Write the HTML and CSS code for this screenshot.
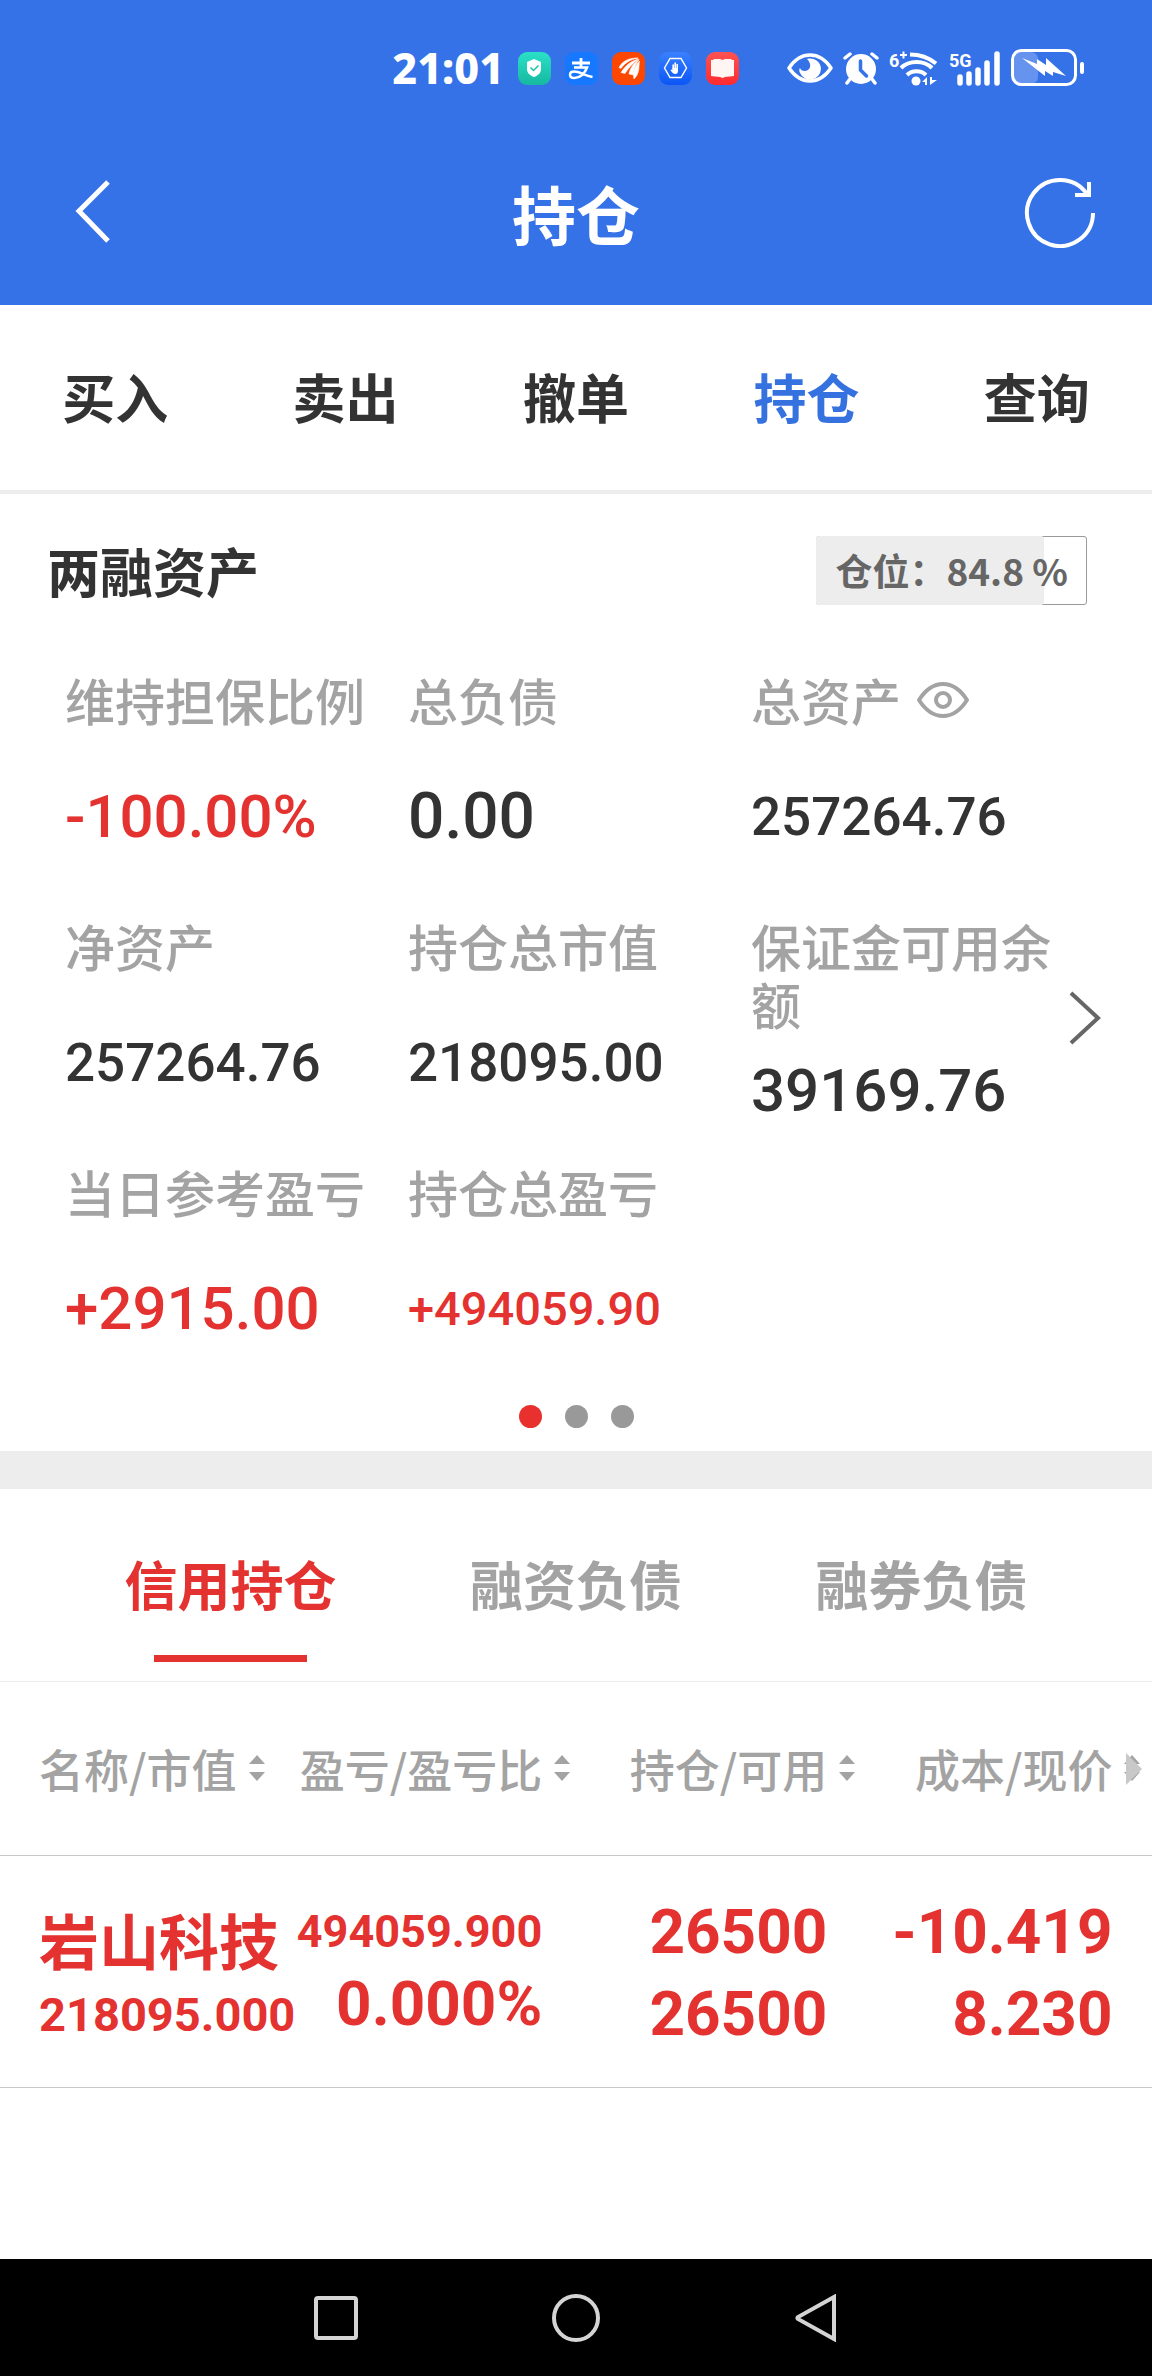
FILE: index.html
```html
<!DOCTYPE html>
<html lang="zh-CN">
<head>
    <meta charset="UTF-8">
    <meta name="viewport" content="width=device-width, initial-scale=1.0">
    <title>持仓</title>
    <link rel="stylesheet" href="styles.css">
</head>
<body>
    <div class="page">
        <header class="header">
            <div class="status-bar">
                <span class="time">21:01</span>
                <div class="app-icons">
                    <svg width="33" height="33" viewBox="0 0 33 33">
                        <defs>
                            <linearGradient id="gGreen" x1="0" y1="0" x2="0" y2="1"><stop offset="0" stop-color="#2be0c8"/><stop offset="1" stop-color="#16b8a0"/></linearGradient>
                        </defs>
                        <rect width="33" height="33" rx="9" fill="url(#gGreen)"/>
                        <path d="M16 7l7 3v7c0 4-3 6.500-7 8-4-1.500-7-4-7-8v-7z" fill="#fff"/>
                        <path d="M12.500 15.500l3 3 5-5" fill="none" stroke="#1cc4ac" stroke-width="1.500"/>
                    </svg>
                    <svg width="33" height="33" viewBox="0 0 33 33" fill="none" stroke="#fff">
                        <rect width="33" height="33" rx="9" fill="#1677ff" stroke="none"/>
                        <path d="M7 11h18M16 6v9" stroke-width="2.800"/>
                        <path d="M9 15.500h13c-2 6-7 10.500-12.500 10.500-3 0-4.500-1.500-4.500-3.300 0-2 2-3.200 4.500-3.200 5 0 10 4 18 5.500" stroke-width="2.500"/>
                    </svg>
                    <svg width="33" height="33" viewBox="0 0 33 33">
                        <rect width="33" height="33" rx="9" fill="#fd4600"/>
                        <path d="M7 15.500C11 8 18 6 26 6c-8 1.500-13 5-17 10.500zM9 20.500C14 13 19 9 26.500 7c-5 4-9.500 8-13.500 14.500zM17 22c1-6 5-11 10-14.500-4 6-5.500 10-5.500 15.500zM22 27c-1.500-7 1-13 5.500-18-1 6 .5 12-5.500 18z" fill="#fff" stroke="#fff" stroke-width=".6"/>
                    </svg>
                    <svg width="33" height="33" viewBox="0 0 33 33">
                        <defs>
                            <linearGradient id="gBlue" x1="0" y1="0" x2="0" y2="1"><stop offset="0" stop-color="#3a80ff"/><stop offset="1" stop-color="#0b56f5"/></linearGradient>
                        </defs>
                        <rect width="33" height="33" rx="9" fill="url(#gBlue)"/>
                        <path d="M11 6.500h11l5.500 9.500-5.500 9.500H11L5.500 16z" fill="none" stroke="#fff" stroke-width="1.400"/>
                        <path d="M14.200 17v-4M16.200 16v-5M18.200 17v-4.500" stroke="#fff" stroke-width="1.600" stroke-linecap="round"/>
                        <path d="M13.400 16h5.600v3c0 2-1 3-2.500 3s-3-.5-5-4l1-.5 1 .8z" fill="#fff"/>
                    </svg>
                    <svg width="33" height="33" viewBox="0 0 33 33">
                        <defs>
                            <linearGradient id="gRed" x1="0" y1="0" x2="0" y2="1"><stop offset="0" stop-color="#ff5252"/><stop offset="1" stop-color="#ff2a2f"/></linearGradient>
                        </defs>
                        <rect width="33" height="33" rx="9" fill="url(#gRed)"/>
                        <path d="M5 8h2l1-1h6l2.500 1L19 7h6l1 1h2v16l-9 1-2.500 1L14 25l-9-1z" fill="#fff5f2"/>
                    </svg>
                </div>
                <div class="sys-icons">
                    <svg width="46" height="32" viewBox="0 0 46 32">
                        <path d="M2 16C8 7 15 3 23 3s15 4 21 13c-6 9-13 13-21 13S8 25 2 16z" fill="none" stroke="#fff" stroke-width="3.500" stroke-linejoin="round"/>
                        <path d="M20 7c7-2 14 3 14 10a11 11 0 0 1-21 4c-1-2-1-4 0-5 1 3 5 4 8 2 4-3 2-8-1-11z" fill="#fff"/>
                    </svg>
                    <svg width="36" height="34" viewBox="0 0 36 34">
                        <path d="M2 7l5-4M34 7l-5-4M7 28l-3 4M29 28l3 4" stroke="#fff" stroke-width="3.500" stroke-linecap="round"/>
                        <circle cx="18" cy="18" r="15" fill="#fff"/>
                        <path d="M17.500 10v9l6 6" fill="none" stroke="#3572e8" stroke-width="3.500" stroke-linecap="round"/>
                    </svg>
                    <svg width="50" height="38" viewBox="0 0 50 38">
                        <text x="0" y="18" class="net-label">6</text>
                        <path d="M11 6h7M14.500 2.500v7" stroke="#fff" stroke-width="2"/>
                        <g fill="none" stroke="#fff" stroke-width="4">
                            <path d="M21 5.500c10 0 18 2.500 26 9"/>
                            <path d="M12 19c8-8 23-8 31 0"/>
                            <path d="M18 26c5-5 14-5 19 0"/>
                        </g>
                        <circle cx="27" cy="32" r="4.500" fill="#fff"/>
                        <path d="M33 33l5-5v8h-2v-3zM41 36v-8h2v3h5z" fill="#fff"/>
                    </svg>
                    <svg width="52" height="38" viewBox="0 0 52 38">
                        <text x="0" y="18" class="net-label">5G</text>
                        <path d="M11 28v6M20 25v9M29 21v13M38 14v20M48 5v29" stroke="#fff" stroke-width="5.500" stroke-linecap="round"/>
                    </svg>
                    <svg width="74" height="38" viewBox="0 0 74 38">
                        <rect x="3" y="3" width="24" height="32" rx="7" fill="#6593ee"/>
                        <rect x="1.500" y="1.500" width="63" height="34" rx="9" fill="none" stroke="#fff" stroke-width="3"/>
                        <path d="M11 9l15 6V10l9 6V9l20 18-13-4v4l-8-5v5z" fill="#fff"/>
                        <path d="M71 15v8" stroke="#fff" stroke-width="4" stroke-linecap="round"/>
                    </svg>
                </div>
            </div>
            <div class="title-bar">
                <button class="icon-btn" aria-label="返回">
                    <svg width="36" height="66" viewBox="0 0 36 66" fill="none" stroke="#fff" stroke-width="5"><path d="M34 3L5 32l29 30"/></svg>
                </button>
                <h1>持仓</h1>
                <button class="icon-btn" aria-label="刷新">
                    <svg width="72" height="72" viewBox="0 0 72 72" fill="none" stroke="#fff" stroke-width="4">
                        <path d="M69 37A33 33 0 1 1 63 18"/>
                        <path d="M65 6v13H51"/>
                    </svg>
                </button>
            </div>
        </header>

        <nav class="main-tabs">
            <a href="#buy">买入</a>
            <a href="#sell">卖出</a>
            <a href="#cancel">撤单</a>
            <a href="#position" class="active">持仓</a>
            <a href="#query">查询</a>
        </nav>

        <section class="assets">
            <div class="assets-head">
                <h2>两融资产</h2>
                <div class="ratio">
                    <div class="ratio-fill" style="width: 84.8%"></div>
                    <span class="ratio-text">仓位：84.8 %</span>
                </div>
            </div>
            <dl class="assets-grid">
                <div><dt>维持担保比例</dt><dd class="size-l red">-100.00%</dd></div>
                <div><dt>总负债</dt><dd class="size-xl">0.00</dd></div>
                <div>
                    <dt>总资产
                        <button class="eye-btn" aria-label="隐藏金额">
                            <svg width="52" height="36" viewBox="0 0 52 36" fill="none" stroke="#a3a3a3" stroke-width="4" stroke-linejoin="round">
                                <path d="M2 18C9 7 17 2 26 2s17 5 24 16c-7 11-15 16-24 16S9 29 2 18z"/>
                                <circle cx="26" cy="18" r="7"/>
                            </svg>
                        </button>
                    </dt>
                    <dd>257264.76</dd>
                </div>
                <div><dt>净资产</dt><dd>257264.76</dd></div>
                <div><dt>持仓总市值</dt><dd>218095.00</dd></div>
                <div><dt>保证金可用余额</dt><dd class="size-l">39169.76</dd></div>
                <div><dt>当日参考盈亏</dt><dd class="size-l red">+2915.00</dd></div>
                <div><dt>持仓总盈亏</dt><dd class="size-s red">+494059.90</dd></div>
            </dl>
            <button class="next-btn" aria-label="下一页">
                <svg width="34" height="54" viewBox="0 0 34 54" fill="none" stroke="#666" stroke-width="4"><path d="M3 2l27 25L3 52"/></svg>
            </button>
            <div class="dots">
                <span class="dot on"></span>
                <span class="dot"></span>
                <span class="dot"></span>
            </div>
        </section>

        <nav class="sub-tabs">
            <a href="#credit" class="active">信用持仓</a>
            <a href="#margin">融资负债</a>
            <a href="#short">融券负债</a>
        </nav>

        <div class="table-wrap">
            <table class="holdings">
                <thead>
                    <tr>
                        <th><button>名称/市值<svg class="sort" viewBox="0 0 16 26"><path d="M0 9l8-9 8 9zM0 17h16l-8 9z"/></svg></button></th>
                        <th><button>盈亏/盈亏比<svg class="sort" viewBox="0 0 16 26"><path d="M0 9l8-9 8 9zM0 17h16l-8 9z"/></svg></button></th>
                        <th><button>持仓/可用<svg class="sort" viewBox="0 0 16 26"><path d="M0 9l8-9 8 9zM0 17h16l-8 9z"/></svg></button></th>
                        <th><button>成本/现价<svg class="sort" viewBox="0 0 16 26"><path d="M0 9l8-9 8 9zM0 17h16l-8 9z"/></svg></button></th>
                    </tr>
                </thead>
                <tbody>
                    <tr>
                        <td class="stock"><span class="name">岩山科技</span><span class="worth">218095.000</span></td>
                        <td class="profit"><span class="amount">494059.900</span><span class="rate">0.000%</span></td>
                        <td><span>26500</span><span>26500</span></td>
                        <td><span>-10.419</span><span>8.230</span></td>
                    </tr>
                </tbody>
            </table>
            <svg class="more" width="16" height="32" viewBox="0 0 16 32"><path d="M0 0l16 16L0 32z" fill="#c8c8c8"/></svg>
        </div>

        <footer class="sys-nav">
            <button class="icon-btn" aria-label="最近任务">
                <svg width="48" height="48" viewBox="0 0 48 48"><rect x="4" y="4" width="40" height="40" rx="2"/></svg>
            </button>
            <button class="icon-btn" aria-label="主页">
                <svg width="48" height="48" viewBox="0 0 48 48"><circle cx="24" cy="24" r="22"/></svg>
            </button>
            <button class="icon-btn" aria-label="返回上一级">
                <svg width="48" height="48" viewBox="0 0 48 48"><path d="M42 3v42L6 25q-1-1 0-2z"/></svg>
            </button>
        </footer>
    </div>
</body>
</html>
```

FILE: styles.css
```css
* {
    box-sizing: border-box;
}

body {
    margin: 0;
    background-color: #fff;
    color: #333;
    font-family: "Noto Sans CJK SC", sans-serif;
}

h1, h2, dl, dd {
    margin: 0;
}

button {
    padding: 0;
    border: 0;
    background: none;
    color: inherit;
    font: inherit;
    cursor: pointer;
}

a {
    color: inherit;
    text-decoration: none;
}

svg {
    display: block;
}

.page {
    display: flex;
    flex-direction: column;
    min-height: 100vh;
}

/* header */
.header {
    background-color: #3572e8;
    color: #fff;
}

.status-bar {
    display: flex;
    align-items: center;
    justify-content: flex-end;
    height: 136px;
    padding-right: 67px;
}

.time {
    margin-right: 14px;
    font-family: "Noto Sans", sans-serif;
    font-size: 43px;
    font-weight: 800;
    line-height: 48px;
}

.app-icons {
    display: flex;
    gap: 14px;
    margin-right: 48px;
}

.sys-icons {
    display: flex;
    align-items: center;
    gap: 10px;
}

.net-label {
    fill: #fff;
    font-family: "Roboto", sans-serif;
    font-size: 18px;
    font-weight: 700;
}

.title-bar {
    display: grid;
    grid-template-columns: 1fr auto 1fr;
    align-items: center;
    height: 169px;
    padding: 0 56px 18px;
}

.title-bar .icon-btn:first-child {
    justify-self: start;
    margin-left: 18px;
}

.title-bar .icon-btn:last-child {
    justify-self: end;
}

.title-bar h1 {
    font-size: 64px;
    font-weight: 700;
    line-height: 80px;
}

/* top tabs */
.main-tabs {
    display: flex;
    border-bottom: 4px solid #ededed;
}

.main-tabs a {
    flex: 1;
    padding: 51px 0 54px;
    font-size: 53px;
    font-weight: 700;
    line-height: 80px;
    text-align: center;
}

.main-tabs .active {
    color: #3572e0;
}

/* assets */
.assets {
    position: relative;
    border-bottom: 38px solid #ededed;
}

.assets-head {
    display: flex;
    align-items: center;
    justify-content: space-between;
    padding: 36px 65px 60px 47px;
}

.assets-head h2 {
    font-size: 53px;
    font-weight: 700;
    line-height: 80px;
}

.ratio {
    position: relative;
    padding: 0 18px;
    border: 1px solid #999;
    border-radius: 3px;
    color: #666;
    font-size: 37px;
    font-weight: 700;
    line-height: 67px;
}

.ratio-fill {
    position: absolute;
    top: -1px;
    bottom: -1px;
    left: -1px;
    border-radius: 3px;
    background-color: #ededed;
}

.ratio-text {
    position: relative;
}

.assets-grid {
    display: grid;
    grid-template-columns: repeat(3, 1fr);
    grid-template-rows: 246px 246px auto;
    padding: 0 58px 0 65px;
}

.assets-grid dt {
    display: flex;
    align-items: flex-start;
    gap: 16px;
    min-height: 88px;
    color: #a3a3a3;
    font-size: 50px;
    font-weight: 500;
    line-height: 58px;
}

.assets-grid dd {
    font-family: "Roboto", sans-serif;
    font-size: 53px;
    font-weight: 500;
    line-height: 118px;
}

.assets-grid .size-s {
    font-size: 47px;
}

.assets-grid .size-l {
    font-size: 60px;
}

.assets-grid .size-xl {
    font-size: 64px;
}

.assets-grid .red {
    color: #e3322f;
}

.eye-btn {
    padding-top: 12px;
}

.next-btn {
    position: absolute;
    top: 497px;
    right: 50px;
}

.dots {
    display: flex;
    justify-content: center;
    gap: 23px;
    padding: 37px 0 23px;
}

.dot {
    width: 23px;
    height: 23px;
    border-radius: 50%;
    background-color: #999;
}

.dot.on {
    background-color: #e8302e;
}

/* holding tabs */
.sub-tabs {
    display: flex;
    padding: 0 5%;
    border-bottom: 1px solid #ebebeb;
}

.sub-tabs a {
    display: flex;
    flex: 1;
    flex-direction: column;
    align-items: center;
    padding: 54px 0 19px;
    color: #a3a3a3;
    font-size: 53px;
    font-weight: 700;
    line-height: 80px;
}

.sub-tabs a::after {
    content: "";
    width: 153px;
    height: 7px;
    margin-top: 32px;
}

.sub-tabs .active {
    color: #e3322f;
}

.sub-tabs .active::after {
    background-color: #e3322f;
}

/* holdings table */
.table-wrap {
    position: relative;
    padding-right: 1%;
    border-bottom: 1px solid #c8c8c8;
    background: linear-gradient(#c8c8c8, #c8c8c8) 0 173px / 100% 1px no-repeat;
}

.holdings {
    width: 100%;
    border-collapse: collapse;
    table-layout: fixed;
}

.holdings th {
    height: 174px;
    padding: 0 0 2px;
    color: #a3a3a3;
    font-size: 45px;
    font-weight: 500;
    text-align: right;
    white-space: nowrap;
}

.holdings th:first-child,
.holdings td:first-child {
    padding-left: 39px;
    text-align: left;
}

.holdings th button {
    display: inline-flex;
    align-items: center;
    gap: 12px;
}

.sort {
    width: 16px;
    height: 26px;
    fill: #a3a3a3;
}

.holdings td {
    padding: 35px 28px 32px 0;
    color: #e3322f;
    font-family: "Roboto", sans-serif;
    font-size: 62px;
    font-weight: 700;
    line-height: 82px;
    text-align: right;
    vertical-align: top;
    white-space: nowrap;
}

.holdings td span {
    display: block;
}

.holdings .name {
    font-family: "Noto Sans CJK SC", sans-serif;
    font-size: 60px;
    line-height: 96px;
}

.holdings .worth {
    font-size: 47px;
    line-height: 56px;
}

.holdings .amount {
    font-size: 45px;
}

.holdings .rate {
    line-height: 62px;
}

.more {
    position: absolute;
    top: 71px;
    right: 10px;
}

/* system navigation */
.sys-nav {
    display: flex;
    align-items: center;
    justify-content: center;
    gap: 192px;
    height: 117px;
    margin-top: auto;
    background-color: #000;
}

.sys-nav svg {
    fill: none;
    stroke: #d4d4d4;
    stroke-width: 4;
}
```
